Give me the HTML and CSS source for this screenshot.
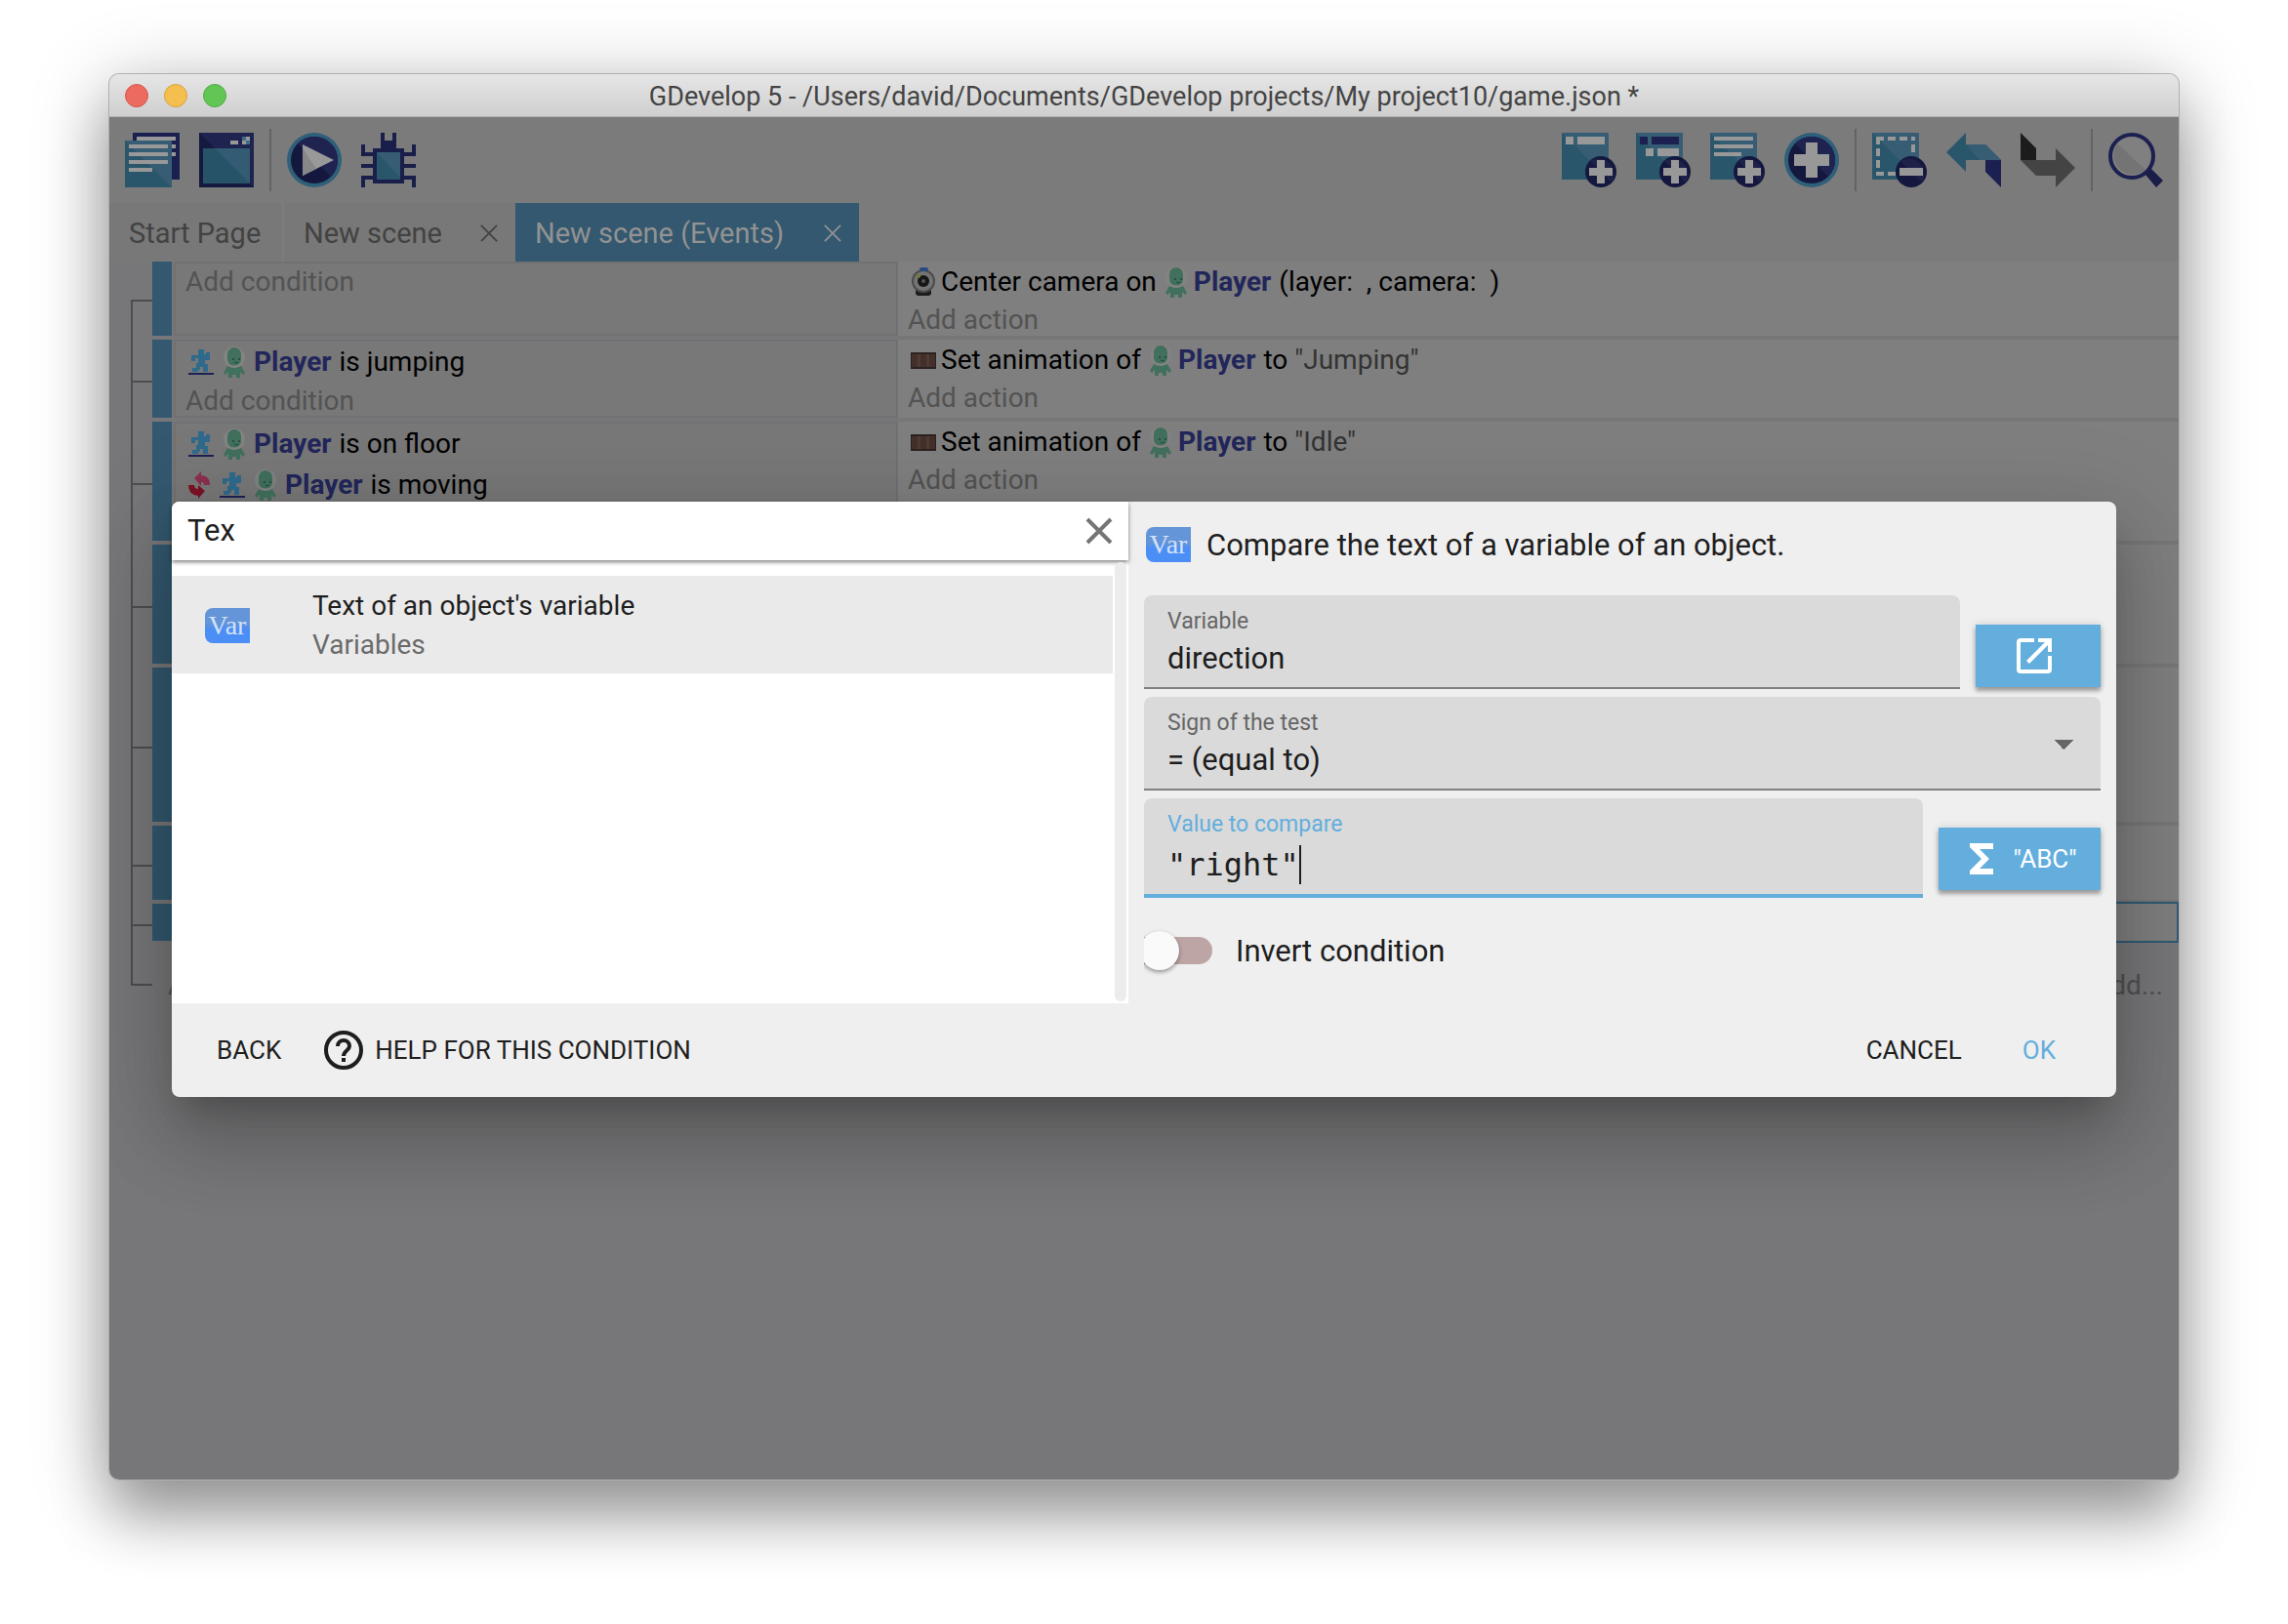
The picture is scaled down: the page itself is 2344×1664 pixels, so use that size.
FILE: index.html
```html
<!DOCTYPE html>
<html lang="en">
<head>
<meta charset="utf-8">
<title>GDevelop 5</title>
<link rel="stylesheet" href="styles.css">
</head>
<body>
<svg class="sprite" aria-hidden="true">
  <symbol id="runner" viewBox="0 0 28 32">
    <path fill="#2f6a8c" d="M11 3h6v5h2V6h4v8h-5v4h3v8h-5v-5h-3v3h-2v2H5v-4h4v-5h2v-5H8v3H4V9h7z"/>
    <path fill="#1c2156" d="M1 27h26v2H1z"/>
  </symbol>
  <symbol id="alien" viewBox="0 0 24 34">
    <circle cx="12" cy="12" r="11" fill="#838383"/>
    <rect x="5" y="2" width="14" height="19" rx="7" fill="#41705d"/>
    <path d="M3 18q9 7 18 0" stroke="#838383" stroke-width="2" fill="none"/>
    <path fill="#41705d" d="M5 21q7 4 14 0l4 7-2 2-3-3v6h-4v-3h-4v3H6v-6l-3 3-2-2z"/>
    <circle cx="11" cy="14" r="1" fill="#22443a"/><circle cx="17" cy="14" r="1" fill="#22443a"/>
    <path d="M12 17q2 2 4 0" stroke="#22443a" fill="none"/>
  </symbol>
  <symbol id="invert" viewBox="0 0 24 30">
    <path fill="#8c3050" d="M7 8l7-7v4q9 0 9 10h-6q0-3-3-3v4z"/>
    <path fill="#7c1226" d="M18 21l-7 8v-3Q1 25 1 15h6q0 4 4 4v-4z"/>
  </symbol>
  <symbol id="webcam" viewBox="0 0 28 32">
    <rect x="6" y="23" width="16" height="7" rx="3" fill="#1d1d1d"/>
    <ellipse cx="14" cy="15" rx="12" ry="12" fill="#4c4c4c"/>
    <ellipse cx="14" cy="15" rx="10" ry="10" fill="#747474"/>
    <circle cx="14" cy="15" r="6" fill="#161616"/><circle cx="14" cy="15" r="2" fill="#555"/>
    <rect x="10" y="1" width="9" height="4" rx="2" fill="#2b4a80"/>
    <circle cx="9" cy="10" r="2" fill="#77782a"/>
  </symbol>
  <symbol id="film" viewBox="0 0 28 32">
    <rect x="1" y="8" width="26" height="17" fill="#2c221f"/>
    <path fill="#43302a" d="M2 10h24v13H2z"/>
    <path fill="#503b33" d="M8 10h3v13H8zM17 10h3v13h-3z"/>
  </symbol>
  <symbol id="close" viewBox="0 0 20 20"><path d="M1 1l18 18M19 1L1 19" stroke="currentColor" stroke-width="2" fill="none"/></symbol>
  <symbol id="badge" viewBox="0 0 32 32">
    <circle cx="16" cy="16" r="16" fill="#14183f"/><path fill="#1e2249" d="M5 5a16 16 0 0 1 22 22z"/>
    <path fill="#989898" d="M12 4h8v8h8v8h-8v8h-8v-8H4v-8h8z"/>
  </symbol>
  <symbol id="sheet" viewBox="0 0 48 48"><path fill="#2a566c" d="M0 0h48v48H0z"/><path fill="#365d74" d="M0 0h48v48z"/></symbol>
</svg>

<main class="window">
  <header class="titlebar">
    <div class="lights">
      <span class="light light--close"></span><span class="light light--min"></span><span class="light light--max"></span>
    </div>
    <h1 class="title">GDevelop 5 - /Users/david/Documents/GDevelop projects/My project10/game.json *</h1>
  </header>

  <div class="content">
    <nav class="toolbar">
      <button class="tool" aria-label="Project manager"><svg viewBox="0 0 56 56">
        <path fill="#1c2050" d="M8 0h48v48H8z"/><path fill="#989898" d="M12 4h40v4H12zM48 12h4v4h-4zM48 20h4v4h-4z"/>
        <use href="#sheet" x="0" y="8" width="48" height="48"/>
        <path fill="#989898" d="M4 12h40v4H4zM4 20h40v4H4zM4 28h40v4H4zM4 36h24v4H4z"/></svg></button>
      <button class="tool" aria-label="Preview window"><svg viewBox="0 0 56 56">
        <path fill="#15193f" d="M0 0h56v56H0z"/><path fill="#1f2350" d="M0 0h56v56z"/>
        <path fill="#265368" d="M4 16h48v36H4z"/><path fill="#335c74" d="M16 16h36v36z"/>
        <path fill="#989898" d="M32 8h8v4h-8zM44 8h4v4h-4zM48 4h4v4h-4z"/><path fill="#3f6d86" d="M44 4h4v4h-4zM48 8h4v4h-4z"/></svg></button>
      <span class="divider"></span>
      <button class="tool" aria-label="Play"><svg viewBox="0 0 56 56">
        <circle cx="28" cy="28" r="28" fill="#2f5f79"/><circle cx="28" cy="28" r="24" fill="#14183f"/>
        <path fill="#1f2350" d="M11 11a24 24 0 0 1 34 34z"/><path fill="#999" d="M16 12v32l32-16z"/><path fill="#878787" d="M16 16v28l14-7z"/></svg></button>
      <button class="tool" aria-label="Debugger"><svg viewBox="0 0 56 56">
        <path fill="#1a1e4a" d="M20 0h4v8h8V0h4v16h8v4h8v-8h4v12H44v8h12v4H44v8h12v12h-4v-8h-8v4H12v-4H4v8H0V44h12v-8H0v-4h12v-8H0V12h4v8h8v-4h8z"/>
        <path fill="#2a566c" d="M16 20h24v28H16z"/><path fill="#365d74" d="M16 20h24v26z"/></svg></button>
      <span class="spacer"></span>
      <button class="tool" aria-label="Add event"><svg viewBox="0 0 56 56">
        <use href="#sheet" width="48" height="48"/><path fill="#989898" d="M4 4h8v8H4zM16 4h28v8H16z"/><use href="#badge" x="24" y="24" width="32" height="32"/></svg></button>
      <button class="tool" aria-label="Add sub-event"><svg viewBox="0 0 56 56">
        <use href="#sheet" width="48" height="48"/><path fill="#1c2050" d="M4 4h8v8H4zM16 4h28v8H16z"/><path fill="#989898" d="M10 16h8v8h-8zM22 16h22v8H22z"/><use href="#badge" x="24" y="24" width="32" height="32"/></svg></button>
      <button class="tool" aria-label="Add comment"><svg viewBox="0 0 56 56">
        <use href="#sheet" width="48" height="48"/><path fill="#989898" d="M4 4h40v4H4zM4 12h40v4H4zM4 20h28v4H4z"/><use href="#badge" x="24" y="24" width="32" height="32"/></svg></button>
      <button class="tool" aria-label="Add other event"><svg viewBox="0 0 56 56">
        <circle cx="28" cy="28" r="28" fill="#2f5f79"/><circle cx="28" cy="28" r="24" fill="#14183f"/><path fill="#1f2350" d="M11 11a24 24 0 0 1 34 34z"/>
        <path fill="#989898" d="M22 10h12v12h12v12H34v12H22V34H10V22h12z"/></svg></button>
      <span class="divider"></span>
      <button class="tool" aria-label="Delete selection"><svg viewBox="0 0 56 56">
        <use href="#sheet" width="48" height="48"/>
        <path d="M4 6h40" stroke="#989898" stroke-width="4" stroke-dasharray="8 4"/><path d="M6 4v40" stroke="#989898" stroke-width="4" stroke-dasharray="8 4"/>
        <path d="M42 12v12M4 42h24" stroke="#989898" stroke-width="4" stroke-dasharray="8 4"/>
        <circle cx="40" cy="40" r="16" fill="#14183f"/><path fill="#1e2249" d="M29 29a16 16 0 0 1 22 22z"/><path fill="#989898" d="M28 36h24v8H28z"/></svg></button>
      <button class="tool" aria-label="Undo"><svg viewBox="0 0 56 56">
        <path fill="#2a566c" d="M0 20L20 0v12h20l16 16H20v12z"/><path fill="#365d74" d="M20 12h20l16 16H34z"/><path fill="#1c2050" d="M40 28h16v28L40 40z"/></svg></button>
      <button class="tool" aria-label="Redo"><svg viewBox="0 0 56 56">
        <path fill="#1c1c1c" d="M0 0l16 16v12H0z"/><path fill="#444" d="M0 28h36V16l20 20-20 20V44H16z"/></svg></button>
      <span class="divider"></span>
      <button class="tool" aria-label="Search"><svg viewBox="0 0 56 56">
        <circle cx="24" cy="24" r="22" fill="#808080" stroke="#1c2050" stroke-width="4"/><path fill="#747474" d="M9 11a20 20 0 0 0 29 27z"/>
        <path fill="#191d47" d="M38 43l6-6 12 12-7 7z"/></svg></button>
    </nav>

    <div class="tabs" role="tablist">
      <button class="tab tab--start" role="tab">Start Page</button>
      <button class="tab tab--scene" role="tab">New scene<svg class="tab__close"><use href="#close"/></svg></button>
      <button class="tab tab--active" role="tab" aria-selected="true">New scene (Events)<svg class="tab__close"><use href="#close"/></svg></button>
    </div>

    <section class="events">
      <div class="event">
        <span class="branch branch--first"></span><span class="handle"></span>
        <div class="conditions"><div class="add">Add condition</div></div>
        <div class="actions">
          <div class="instruction"><svg class="icon icon--lead"><use href="#webcam"/></svg><span>Center camera on</span><svg class="alien"><use href="#alien"/></svg><b class="object">Player</b><span>(layer:&nbsp; , camera:&nbsp; )</span></div>
          <div class="add">Add action</div>
        </div>
      </div>
      <div class="event">
        <span class="branch"></span><span class="handle"></span>
        <div class="conditions">
          <div class="instruction"><svg class="icon"><use href="#runner"/></svg><svg class="alien"><use href="#alien"/></svg><b class="object">Player</b><span>is jumping</span></div>
          <div class="add">Add condition</div>
        </div>
        <div class="actions">
          <div class="instruction"><svg class="icon icon--lead"><use href="#film"/></svg><span>Set animation of</span><svg class="alien"><use href="#alien"/></svg><b class="object">Player</b><span>to <span class="string">"Jumping"</span></span></div>
          <div class="add">Add action</div>
        </div>
      </div>
      <div class="event">
        <span class="branch"></span><span class="handle"></span>
        <div class="conditions">
          <div class="instruction"><svg class="icon"><use href="#runner"/></svg><svg class="alien"><use href="#alien"/></svg><b class="object">Player</b><span>is on floor</span></div>
          <div class="instruction"><svg class="invert"><use href="#invert"/></svg><svg class="icon"><use href="#runner"/></svg><svg class="alien"><use href="#alien"/></svg><b class="object">Player</b><span>is moving</span></div>
          <div class="add">Add condition</div>
        </div>
        <div class="actions">
          <div class="instruction"><svg class="icon icon--lead"><use href="#film"/></svg><span>Set animation of</span><svg class="alien"><use href="#alien"/></svg><b class="object">Player</b><span>to <span class="string">"Idle"</span></span></div>
          <div class="add">Add action</div>
        </div>
      </div>
      <div class="event event--three"><span class="branch"></span><span class="handle"></span><div class="conditions"></div><div class="actions"></div></div>
      <div class="event event--four"><span class="branch"></span><span class="handle"></span><div class="conditions"></div><div class="actions"></div></div>
      <div class="event event--two"><span class="branch"></span><span class="handle"></span><div class="conditions"></div><div class="actions"></div></div>
      <div class="event event--one"><span class="branch"></span><span class="handle"></span><div class="conditions"></div><div class="actions actions--selected"></div></div>
      <div class="more"><span class="branch branch--last"></span><span class="more__new">Add a new event</span><span class="more__menu">Add...</span></div>
    </section>

    <div class="overlay">
      <form class="dialog" role="dialog">
        <div class="panes">
          <section class="picker">
            <div class="search">
              <input class="search__input" type="text" value="Tex" aria-label="Search conditions">
              <button class="search__clear" type="button" aria-label="Clear"><svg viewBox="0 0 28 28"><path d="M2 2l24 24M26 2L2 26" stroke="#757575" stroke-width="4"/></svg></button>
            </div>
            <div class="list">
              <ul class="results">
                <li class="result"><span class="var">Var</span><div><div class="result__name">Text of an object's variable</div><div class="result__group">Variables</div></div></li>
              </ul>
              <div class="scrollbar"></div>
            </div>
          </section>
          <section class="params">
            <h2 class="heading"><span class="var">Var</span>Compare the text of a variable of an object.</h2>
            <div class="row">
              <div class="field"><label class="field__label" for="variable">Variable</label><input class="field__input" id="variable" type="text" value="direction"></div>
              <button class="action action--open" type="button" aria-label="Edit variables"><svg class="open" viewBox="0 0 36 36"><path fill="#fff" d="M18 0v4H4v28h28V18h4v14a4 4 0 0 1-4 4H4a4 4 0 0 1-4-4V4a4 4 0 0 1 4-4zM22 0h14v14h-4V7L13 26l-3-3L29 4h-7z"/></svg></button>
            </div>
            <div class="row">
              <div class="field"><label class="field__label" for="sign">Sign of the test</label><select class="field__input field__input--select" id="sign"><option>= (equal to)</option></select></div>
            </div>
            <div class="row">
              <div class="field field--focus"><label class="field__label" for="value">Value to compare</label><input class="field__input field__input--code" id="value" type="text" value="&quot;right&quot;"></div>
              <button class="action action--expr" type="button"><svg class="sigma" viewBox="0 0 24 32"><path fill="#fff" d="M0 0h24v6H10l10 10-10 10h14v6H0v-4l12-12L0 4z"/></svg>"ABC"</button>
            </div>
            <label class="invert-row"><input class="switch" type="checkbox">Invert condition</label>
          </section>
        </div>
        <footer class="footer">
          <button class="flat flat--back" type="button">BACK</button>
          <button class="flat flat--help" type="button"><svg class="help" viewBox="0 0 40 40"><circle cx="20" cy="20" r="18" fill="none" stroke="#1e1e1e" stroke-width="4"/><path d="M14 16a6 6 0 0 1 12 0c0 4-6 5-6 10" fill="none" stroke="#1e1e1e" stroke-width="4"/><path fill="#1e1e1e" d="M18 28h4v4h-4z"/></svg>HELP FOR THIS CONDITION</button>
          <span class="spacer"></span>
          <button class="flat flat--cancel" type="button">CANCEL</button>
          <button class="flat flat--ok" type="submit">OK</button>
        </footer>
      </form>
    </div>
  </div>
</main>
</body>
</html>
```

FILE: styles.css
```css
* { box-sizing: border-box; }

body {
  margin: 0;
  min-height: 100vh;
  padding: 76px 112px 148px;
  display: flex;
  flex-direction: column;
  background: #fff;
  font-family: Roboto, "Liberation Sans", sans-serif;
  font-size: 28px;
}

button, input, select { font: inherit; color: inherit; margin: 0; padding: 0; border: 0; background: none; border-radius: 0; outline: 0; }
h1, h2, ul { margin: 0; padding: 0; font-weight: 400; list-style: none; }
svg { display: block; flex: none; }
.sprite { position: absolute; width: 0; height: 0; }
.spacer { flex: 1; }

.window {
  flex: 1;
  display: flex;
  flex-direction: column;
  border-radius: 10px;
  box-shadow: 0 0 0 1px #b0b0b0, 0 40px 60px rgba(0, 0, 0, .3), 0 10px 80px rgba(0, 0, 0, .26);
  overflow: hidden;
}

.titlebar {
  display: grid;
  grid-template-columns: 1fr auto 1fr;
  align-items: center;
  height: 44px;
  padding: 0 16px;
  background: linear-gradient(#e6e6e6, #cfcfcf);
  border-bottom: 1px solid #b2b2b2;
}
.lights { display: flex; gap: 16px; }
.light { width: 24px; height: 24px; border-radius: 50%; border: 1px solid; }
.light--close { background: #ec6a5f; border-color: #d5564c; }
.light--min { background: #f5bf4f; border-color: #d9a13c; }
.light--max { background: #62c655; border-color: #50a944; }
.title { padding-top: 2px; font-size: 27px; color: #444; white-space: nowrap; }

.content { flex: 1; display: grid; grid-template: auto auto 1fr / 1fr; position: relative; background: #777779; }

.toolbar { display: flex; align-items: center; gap: 16px; height: 88px; padding: 0 16px; background: #7b7b7b; }
.tool { width: 56px; height: 56px; margin-right: 4px; }
.tool:last-child { margin-right: 0; }
.divider { width: 2px; height: 64px; margin-left: -4px; background: #636363; }
.tool svg { width: 56px; height: 56px; }

.tabs { display: flex; height: 60px; background: #7b7b7b; color: #424242; font-size: 29px; }
.tab { display: flex; align-items: center; justify-content: space-between; padding: 2px 18px 0 20px; background: #787878; border-left: 2px solid #7d7d7d; white-space: nowrap; }
.tab--start { width: 177px; border-left: 0; }
.tab--scene { width: 239px; }
.tab--active { width: 352px; background: #33586f; border: 0; color: #929292; }
.tab__close { width: 18px; height: 18px; }

.events { display: flex; flex-direction: column; gap: 4px; min-width: 0; }
.event { display: grid; grid-template-columns: 44px 20px 744px 1fr; }
.event--four { height: 158px; }
.event--three { height: 122px; }
.event--two { height: 76px; }
.event--one { height: 38px; }
.handle { background: #33586f; }
.branch {
  margin-bottom: -4px;
  background:
    linear-gradient(#4d4d4f, #4d4d4f) 22px 0 / 2px 100% no-repeat,
    linear-gradient(#4d4d4f, #4d4d4f) 22px calc(50% + 1px) / 22px 2px no-repeat;
}
.branch--first { background-size: 2px 50%, 22px 2px; background-position: 22px 100%, 22px 50%; }
.branch--last { margin: 0; background-size: 2px 50%, 22px 2px; background-position: 22px 0, 22px 50%; }
.conditions { margin-left: 2px; padding-left: 10px; border: 2px solid #717173; background: #787878; }
.actions { padding-left: 10px; background: #7f7f7f; }
.actions--selected { margin: -2px 0; border: 2px solid #2f5a74; }
.instruction { display: flex; align-items: center; gap: 8px; color: #000; white-space: nowrap; }
.conditions .instruction { height: 42px; padding-left: 2px; line-height: 40px; }
.conditions .add { height: 34px; line-height: 38px; }
.actions .instruction { height: 41px; padding-left: 2px; }
.actions .add { height: 35px; line-height: 38px; }
.add { color: #535353; }
.icon { width: 28px; height: 32px; }
.icon--lead { margin-right: -4px; }
.alien { width: 24px; height: 34px; }
.actions .alien { margin-right: -2px; }
.invert { width: 24px; height: 30px; }
.object { color: #22265a; }
.string { color: #333; }
.more { display: flex; align-items: center; height: 82px; padding-right: 16px; color: #505052; }
.more .branch { width: 44px; height: 100%; }
.more__new { flex: 1; padding-left: 16px; }

.overlay { position: absolute; inset: 0; display: flex; align-items: center; padding: 2px 64px 0; overflow: hidden; }
.dialog {
  flex: 1;
  min-width: 0;
  border-radius: 8px;
  background: #efefef;
  color: #1e1e1e;
  box-shadow: 0 22px 30px -14px rgba(0, 0, 0, .2), 0 48px 76px 6px rgba(0, 0, 0, .14), 0 18px 92px 16px rgba(0, 0, 0, .12);
}
.panes { display: grid; grid-template-columns: 980px 1fr; min-height: 514px; }

.picker { display: flex; flex-direction: column; background: #fff; border-top-left-radius: 8px; }
.search { display: flex; align-items: center; height: 60px; padding: 0 16px; border-radius: 8px 0 0 0; background: #fff; box-shadow: 0 2px 4px rgba(0, 0, 0, .5); }
.search__input { flex: 1; min-width: 0; padding-bottom: 2px; font-size: 31px; }
.search__clear svg { width: 28px; height: 28px; }
.list { flex: 1; display: flex; justify-content: space-between; padding: 2px 2px 2px 0; }
.results { flex: 1; padding-top: 14px; margin-right: 2px; }
.result { display: flex; align-items: center; gap: 64px; height: 100px; padding: 2px 0 0 34px; background: #eaeaea; line-height: 40px; }
.result__group { color: #6a6a6a; }
.scrollbar { width: 12px; border-radius: 6px; background: #ececec; }
.var {
  flex: none;
  width: 46px;
  height: 36px;
  border-radius: 8px 0 0 8px;
  background: linear-gradient(#6495d8 45%, #4b8ef5 60%);
  color: #d3e1f8;
  font: 28px/36px "Liberation Serif", serif;
  text-align: center;
}

.params { display: flex; flex-direction: column; gap: 8px; padding: 0 16px; }
.heading { display: flex; align-items: center; gap: 16px; height: 88px; padding-left: 2px; font-size: 31px; }
.row { display: flex; align-items: flex-start; gap: 16px; }
.field { flex: 1; min-width: 0; height: 96px; padding: 10px 24px 0; border-radius: 8px 8px 0 0; border-bottom: 2px solid #808080; background: #dadada; }
.field--focus { height: 102px; border-bottom: 4px solid #63aedd; }
.field__label { display: block; font-size: 23px; line-height: 34px; color: #666; }
.field--focus .field__label { color: #63aedd; }
.field__input { display: block; width: 100%; height: 40px; font-size: 31px; }
.field__input--select {
  appearance: none;
  background:
    linear-gradient(to top right, transparent 50%, #666 50%) right 14px top 0 / 10px 10px no-repeat,
    linear-gradient(to top left, transparent 50%, #666 50%) right 4px top 0 / 10px 10px no-repeat;
}
.field__input--code { height: 48px; font: 32px/48px "DejaVu Sans Mono", monospace; background: linear-gradient(#1e1e1e, #1e1e1e) 7ch 4px / 2px 40px no-repeat; }
.action {
  display: flex;
  align-items: center;
  justify-content: center;
  height: 64px;
  margin-top: 30px;
  background: #63aedd;
  color: #fff;
  font-size: 26px;
  box-shadow: 0 4px 4px rgba(0, 0, 0, .3), 0 0 8px rgba(0, 0, 0, .15);
}
.action--open { width: 128px; padding-right: 8px; }
.action--expr { width: 166px; gap: 20px; padding-left: 8px; }
.open { width: 36px; height: 36px; }
.sigma { width: 24px; height: 32px; }
.invert-row { display: flex; align-items: center; gap: 24px; height: 92px; font-size: 31px; overflow: hidden; }
.switch { appearance: none; display: flex; align-items: center; width: 70px; height: 28px; border-radius: 0 14px 14px 0; background: #bda5a5; }
.switch::before { content: ""; width: 40px; height: 40px; margin-left: -4px; border-radius: 50%; background: #fafafa; box-shadow: 0 2px 4px rgba(0, 0, 0, .4); }

.footer { display: flex; align-items: center; height: 96px; padding: 0 62px 0 46px; font-size: 26px; }
.flat { display: flex; align-items: center; white-space: nowrap; }
.flat--back { margin-right: 44px; }
.flat--help { gap: 12px; }
.help { width: 40px; height: 40px; }
.flat--cancel { margin-right: 62px; }
.flat--ok { color: #63aedd; }
```
